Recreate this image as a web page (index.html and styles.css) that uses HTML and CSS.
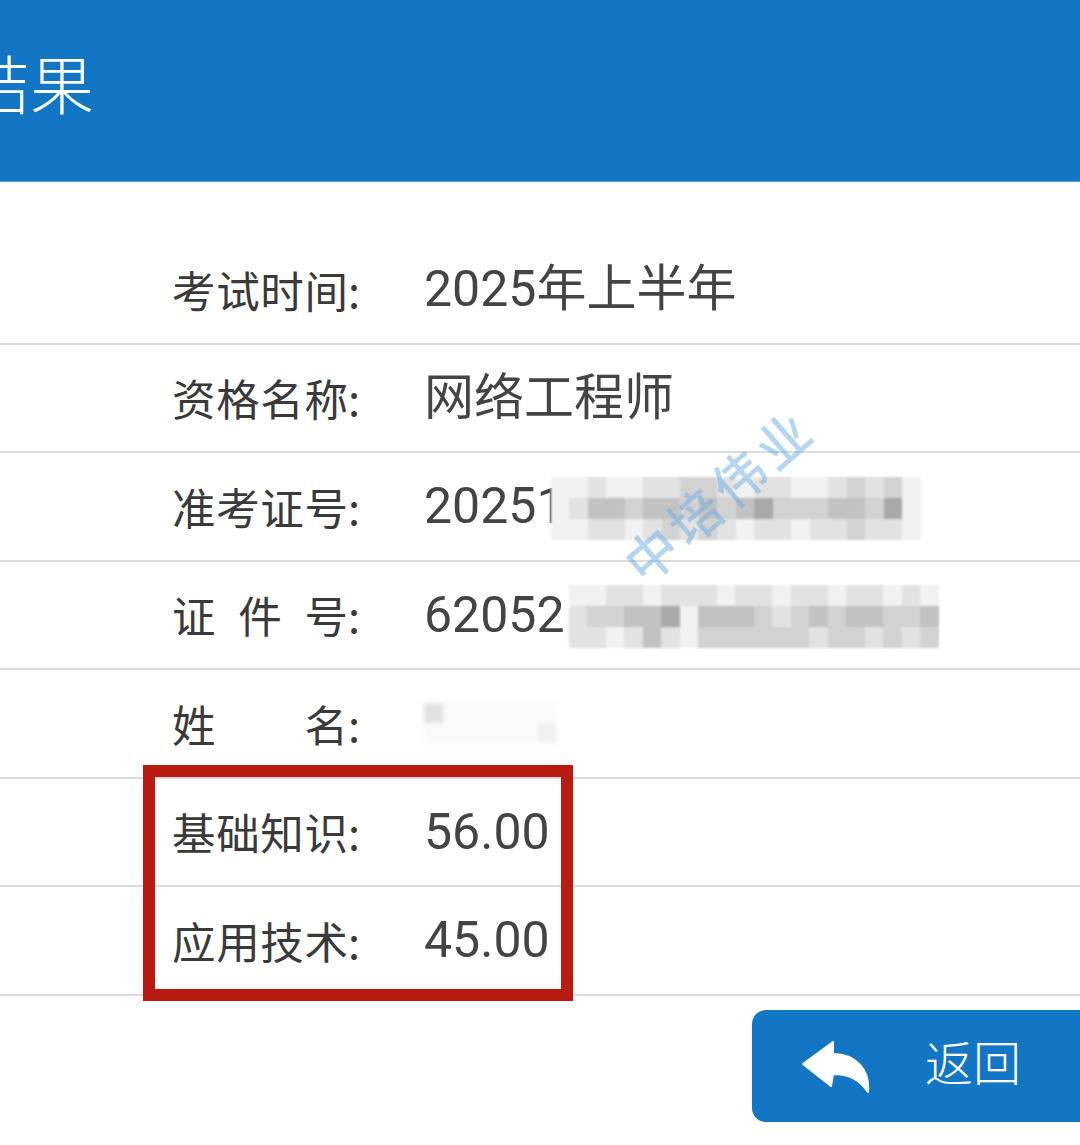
FILE: index.html
```html
<!DOCTYPE html>
<html lang="zh-CN">
<head>
    <meta charset="UTF-8">
    <meta name="viewport" content="width=device-width, initial-scale=1.0">
    <title>成绩查询结果</title>
    <link rel="stylesheet" href="styles.css">
</head>
<body>
    <div class="header">
        <h1 class="title">结果</h1>
    </div>

    <div class="list">
        <div class="row">
            <span class="label"><span class="name">考试时间</span>:</span>
            <span class="value">2025年上半年</span>
        </div>
        <div class="row">
            <span class="label"><span class="name">资格名称</span>:</span>
            <span class="value">网络工程师</span>
        </div>
        <div class="row">
            <span class="label"><span class="name">准考证号</span>:</span>
            <span class="value">20251</span>
            <div class="mosaic mosaic-ticket">
                <i class="a"></i><i class="a"></i><i class="b"></i><i class="a"></i><i class="a"></i><i class="b"></i><i class="b"></i><i class="c"></i><i class="c"></i><i class="b"></i><i class="a"></i><i class="b"></i><i class="b"></i><i class="a"></i><i class="a"></i><i class="b"></i><i class="c"></i><i class="b"></i><i class="c"></i><i class="a"></i>
                <i class="a"></i><i class="b"></i><i class="d"></i><i class="d"></i><i class="c"></i><i class="d"></i><i class="d"></i><i class="c"></i><i class="d"></i><i class="c"></i><i class="d"></i><i class="e"></i><i class="c"></i><i class="c"></i><i class="c"></i><i class="d"></i><i class="d"></i><i class="c"></i><i class="e"></i><i class="a"></i>
                <i class="a"></i><i class="a"></i><i class="b"></i><i class="b"></i><i class="a"></i><i class="b"></i><i class="c"></i><i class="b"></i><i class="c"></i><i class="b"></i><i class="a"></i><i class="b"></i><i class="b"></i><i class="a"></i><i class="b"></i><i class="b"></i><i class="c"></i><i class="b"></i><i class="b"></i><i class="a"></i>
            </div>
        </div>
        <div class="row">
            <span class="label"><span class="name">证件号</span>:</span>
            <span class="value">62052</span>
            <div class="mosaic mosaic-id">
                <i class="a"></i><i class="a"></i><i class="b"></i><i class="b"></i><i class="a"></i><i class="b"></i><i class="b"></i><i class="b"></i><i class="a"></i><i class="b"></i><i class="b"></i><i class="a"></i><i class="b"></i><i class="b"></i><i class="a"></i><i class="b"></i><i class="b"></i><i class="a"></i><i class="b"></i><i class="a"></i>
                <i class="b"></i><i class="c"></i><i class="c"></i><i class="d"></i><i class="d"></i><i class="e"></i><i class="a"></i><i class="d"></i><i class="d"></i><i class="d"></i><i class="c"></i><i class="b"></i><i class="c"></i><i class="d"></i><i class="c"></i><i class="d"></i><i class="d"></i><i class="c"></i><i class="c"></i><i class="d"></i>
                <i class="b"></i><i class="b"></i><i class="a"></i><i class="b"></i><i class="d"></i><i class="b"></i><i class="a"></i><i class="c"></i><i class="c"></i><i class="c"></i><i class="c"></i><i class="c"></i><i class="c"></i><i class="b"></i><i class="c"></i><i class="c"></i><i class="b"></i><i class="c"></i><i class="b"></i><i class="c"></i>
            </div>
        </div>
        <div class="row">
            <span class="label"><span class="name">姓名</span>:</span>
            <div class="mosaic mosaic-name">
                <i class="b"></i><i class="f"></i><i class="f"></i><i class="f"></i><i class="f"></i><i class="f"></i><i class="f"></i>
                <i class="f"></i><i class="f"></i><i class="f"></i><i class="f"></i><i class="f"></i><i class="f"></i><i class="a"></i>
            </div>
        </div>

        <div class="scores">
            <div class="row">
                <span class="label"><span class="name">基础知识</span>:</span>
                <span class="value">56.00</span>
            </div>
            <div class="row">
                <span class="label"><span class="name">应用技术</span>:</span>
                <span class="value">45.00</span>
            </div>
            <div class="highlight"></div>
        </div>
    </div>

    <div class="footer">
        <button class="back-button">
            <svg class="back-icon" viewBox="0 0 70 54" width="70" height="54">
                <path d="M3 24 L33 2 L33 14 C56 14 70 30 68 52 C60 40 50 34 33 34 L31 46 Z" fill="#fff" stroke="#fff" stroke-width="2" stroke-linejoin="round"/>
            </svg>
            <span>返回</span>
        </button>
    </div>

    <div class="watermark">中培伟业</div>
</body>
</html>
```

FILE: styles.css
```css
body { margin: 0; background: #fff; font-family: "Noto Sans CJK SC", sans-serif; overflow: hidden; position: relative; height: 1145px; }

.header { height: 181px; background-color: #1376c5; border-bottom: 1px solid #5b9fd8; display: flex; align-items: center; }
.title { margin: 0 0 0 -34px; color: #fff; font-size: 64px; font-weight: 300; line-height: 1; padding-bottom: 20px; }

.list { padding-top: 54px; }
.row { height: 108.5px; box-sizing: border-box; border-bottom: 2px solid #dcdcdc; display: flex; align-items: center; padding-left: 172px; color: #3a3a3a; }
.label { width: 252px; flex: none; font-size: 43.5px; line-height: 1; }
.name { display: inline-block; width: 176px; text-align: justify; text-align-last: justify; }
.value { font-family: Roboto, "Noto Sans CJK SC", sans-serif; font-size: 50px; line-height: 1; color: #444; }

.mosaic { display: grid; grid-template-columns: repeat(20, 18.5px); grid-auto-rows: 21px; filter: blur(1.2px); }
.mosaic i { display: block; }
.mosaic-ticket { margin-left: -14px; margin-top: 4px; }
.mosaic-id { margin-left: 4px; margin-top: 4px; }
.mosaic-name { grid-template-columns: repeat(7, 19px); grid-auto-rows: 20px; filter: blur(2px); }
.mosaic .a { background: #f1f1f1; }
.mosaic .b { background: #e2e2e2; }
.mosaic .c { background: #d2d2d2; }
.mosaic .d { background: #c2c2c2; }
.mosaic .e { background: #a9a9a9; }
.mosaic .f { background: #fafafa; }

.scores { position: relative; }
.highlight { position: absolute; left: 143px; top: -13.5px; width: 430px; height: 236px; box-sizing: border-box; border: 12px solid #b91b12; }

.footer { display: flex; justify-content: flex-end; margin-top: 14.5px; }
.back-button { width: 344px; height: 112px; margin-right: -16px; background-color: #1376c5; border: none; border-radius: 14px; display: flex; align-items: center; padding: 0 0 0 48px; color: #fff; font-family: "Noto Sans CJK SC", sans-serif; font-size: 48px; font-weight: 300; cursor: pointer; }
.back-icon { flex: none; margin-top: 2px; }
.back-button span { margin-left: 55px; margin-bottom: 12px; line-height: 1; }

.watermark { position: absolute; left: 588px; top: 468px; width: 260px; text-align: center; font-size: 52px; font-weight: 500; line-height: 1; letter-spacing: 6px; color: rgba(110, 172, 226, 0.5); transform: rotate(-41deg); }
```
